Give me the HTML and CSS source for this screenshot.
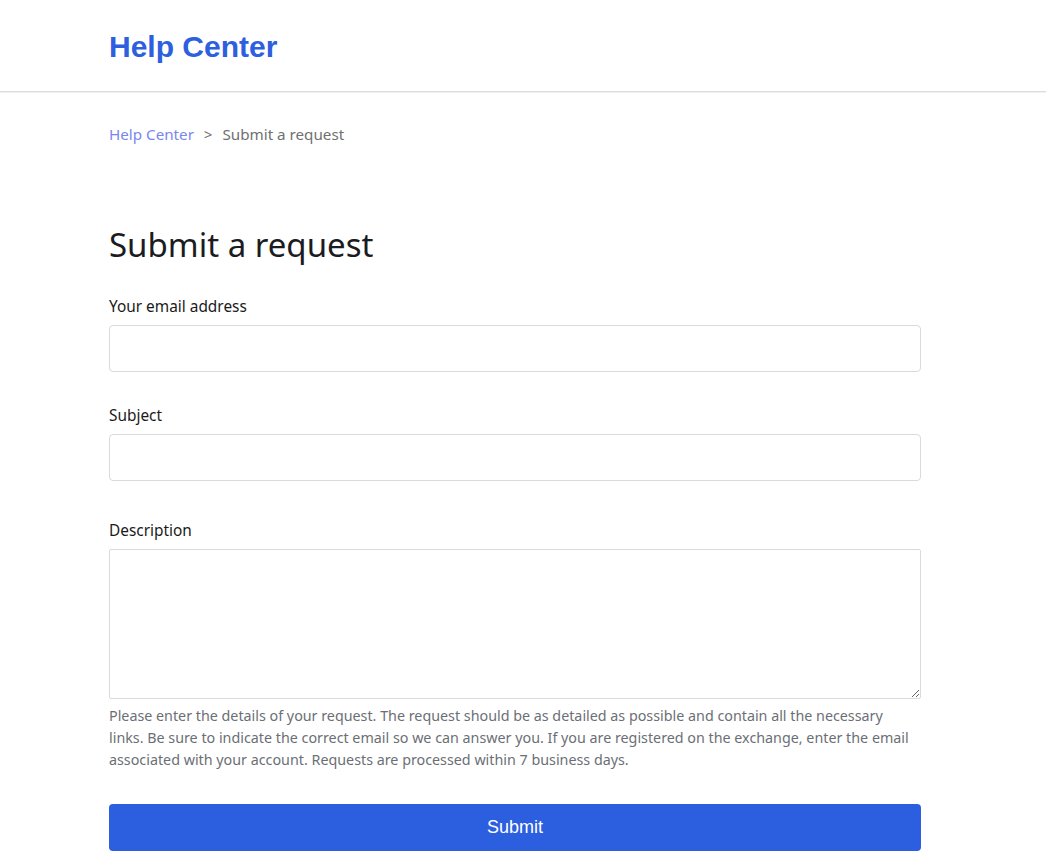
FILE: index.html
```html
<!DOCTYPE html>
<html>
<head>
	<meta charset="utf-8">
	<title>Submit a request</title>
	<link rel="stylesheet" href="styles.css">
</head>
<body>
<header class="header">
	<div class="wrap">
		<a href="javascript:;" class="logo">Help Center</a>
	</div>
</header>
<main class="wrap">
	<nav class="crumbs">
		<a href="javascript:;">Help Center</a>
		<span class="sep">&gt;</span>
		<span>Submit a request</span>
	</nav>
	<h1 class="title">Submit a request</h1>
	<form class="form">
		<div class="field">
			<label for="email">Your email address</label>
			<input type="email" id="email">
		</div>
		<div class="field field-wide">
			<label for="subject">Subject</label>
			<input type="text" id="subject">
		</div>
		<div class="field">
			<label for="desc">Description</label>
			<textarea id="desc"></textarea>
			<p class="hint">Please enter the details of your request. The request should be as detailed as possible and contain all the necessary links. Be sure to indicate the correct email so we can answer you. If you are registered on the exchange, enter the email associated with your account. Requests are processed within 7 business days.</p>
		</div>
		<button type="button" class="submit">Submit</button>
	</form>
</main>
</body>
</html>
```
FILE: styles.css
```css
*{
	margin: 0;
	padding: 0;
	box-sizing: border-box;
	text-decoration: none;
}
body{
	font-family: "Noto Sans", "Open Sans", sans-serif;
	color: #1a1a1a;
	background: #fff;
}
.wrap{
	width: 812px;
	margin-left: 109px;
}
.header{
	height: 92px;
	border-bottom: 1px solid #dcdcdc;
	box-shadow: 0 1px 0 #f0f0f0;
}
.header .wrap{
	height: 91px;
	display: flex;
	align-items: center;
}
.logo{
	font-family: "Liberation Sans", Arial, sans-serif;
	font-weight: bold;
	font-size: 30px;
	color: #2d5fde;
	margin-top: 3px;
}
.crumbs{
	margin-top: 32px;
	font-size: 15.2px;
	line-height: 20px;
	color: #707070;
}
.crumbs a{
	color: #7a86f0;
}
.crumbs .sep{
	margin: 0 6px 0 6px;
}
.title{
	margin-top: 81px;
	font-size: 33px;
	font-weight: 400;
	line-height: 40px;
	color: #1b1b22;
}
.form{
	margin-top: 31px;
}
.field{
	margin-bottom: 33px;
}
.field-wide{
	margin-bottom: 39px;
}
.field label{
	display: block;
	font-size: 15.4px;
	line-height: 22px;
	margin-bottom: 7px;
}
.field input,
.field textarea{
	display: block;
	width: 100%;
	height: 47px;
	border: 1px solid #dadada;
	border-radius: 4px;
	font: inherit;
	padding: 0 12px;
	outline: none;
}
.field textarea{
	height: 150px;
	border-radius: 2px;
	resize: vertical;
}
.hint{
	margin-top: 6px;
	font-size: 14.3px;
	line-height: 22px;
	color: #6b6f75;
}
.submit{
	display: block;
	width: 100%;
	height: 47px;
	margin-top: 33px;
	border: none;
	border-radius: 4px;
	background: #2c5fdf;
	color: #fff;
	font-family: "Liberation Sans", Arial, sans-serif;
	font-size: 18px;
	cursor: pointer;
}
```
